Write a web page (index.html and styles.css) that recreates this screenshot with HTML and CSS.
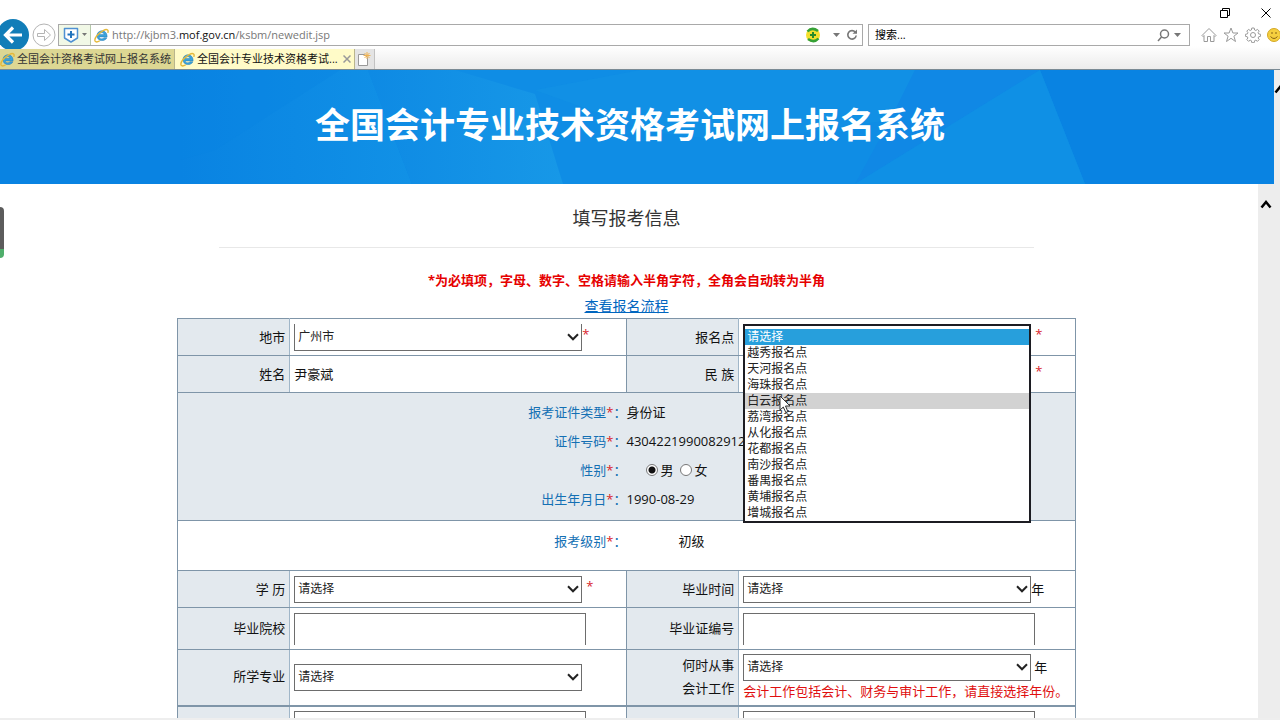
FILE: index.html
```html
<!DOCTYPE html>
<html lang="zh-CN">
<head>
<meta charset="utf-8">
<title>全国会计专业技术资格考试网上报名系统</title>
<link rel="stylesheet" href="styles.css">
</head>
<body>
<svg class="defs" aria-hidden="true">
  <symbol id="ie" viewBox="0 0 16 16">
    <path d="M14 9.500H5.600c.3 2.500 3.900 2.700 4.900.9h3.200c-1.300 4.200-10.200 4.400-10.500-2C3 1.300 14.300.9 14 9.500zM5.700 7h5c-.2-2.600-4.700-2.600-5 0z" fill="#3ba3dc" stroke="#2179b5" stroke-width=".5"/>
    <path d="M14.700 5.200c1.200-3.300-.8-4.700-4.800-2.500C4.500 5.300-.2 11.300 1.200 14c.8 1.300 3 .8 5-.4" fill="none" stroke="#e5b93a" stroke-width="1.500"/>
  </symbol>
  <symbol id="chevron" viewBox="0 0 12 8"><path d="M1 1.300l5 5 5-5" fill="none" stroke="#222" stroke-width="2"/></symbol>
  <symbol id="up" viewBox="0 0 12 10"><path d="M1.500 8.500L6 3l4.500 5.500" fill="none" stroke="#000" stroke-width="2.500"/></symbol>
</svg>

<header class="chrome">
  <div class="titlebar">
    <button class="plain" aria-label="还原"><svg width="10" height="10" viewBox="0 0 10 10" fill="none" stroke="#000"><path d="M.5 2.500h7v7h-7zM2.500 2.500v-2h7v7h-2"/></svg></button>
    <button class="plain" aria-label="关闭"><svg width="10" height="10" viewBox="0 0 10 10" stroke="#000"><path d="M.5.5l9 9M9.500.5l-9 9"/></svg></button>
  </div>
  <div class="toolbar">
    <button class="plain back" aria-label="后退"><svg width="32" height="32" viewBox="0 0 32 32"><circle cx="16" cy="16" r="16" fill="#117db8"/><path d="M25 16H9M16 8.500L8.500 16l7.500 7.500" fill="none" stroke="#fff" stroke-width="3.200"/></svg></button>
    <button class="plain" aria-label="前进"><svg width="24" height="24" viewBox="0 0 24 24" fill="none" stroke="#b4b4b4"><circle cx="12" cy="12" r="11"/><path d="M5.500 10.500h7V6.500l6 5.500-6 5.500v-4h-7z"/></svg></button>
    <div class="address">
      <button class="plain shield" aria-label="安全">
        <svg width="16" height="16" viewBox="0 0 16 16"><path d="M1.500 1.500h13v9.500l-6.500 4-6.500-4z" fill="#fff" stroke="#4f91d2" stroke-width="1.500" stroke-linejoin="round"/><path d="M8 4v7M4.500 7.500h7" stroke="#2274bd" stroke-width="2"/></svg>
        <svg width="5" height="4" viewBox="0 0 5 4"><path d="M0 0h5L2.500 3z" fill="#777"/></svg>
      </button>
      <svg class="ie" width="15" height="15"><use href="#ie"/></svg>
      <div class="url">http://kjbm3.<b>mof.gov.cn</b>/ksbm/newedit.jsp</div>
      <svg width="16" height="16" viewBox="0 0 16 16"><circle cx="8" cy="8" r="7" fill="#f4e02d"/><path d="M2.500 4.500Q7-.5 13 4M13.500 11.500Q9 16.500 3 12" fill="none" stroke="#35a136" stroke-width="2.500"/><path d="M8 5v6M5 8h6" stroke="#278b2b" stroke-width="2"/></svg>
      <svg class="drop" width="7" height="4" viewBox="0 0 7 4"><path d="M0 0h7L3.500 4z" fill="#777"/></svg>
      <button class="plain" aria-label="刷新"><svg width="12" height="12" viewBox="0 0 12 12"><path d="M9.300 3.200A4.200 4.200 0 1 0 10.200 6.500" fill="none" stroke="#777" stroke-width="1.600"/><path d="M6.500 4.800H11V.5z" fill="#777"/></svg></button>
    </div>
    <div class="search">
      <input type="text" value="搜索..." aria-label="搜索">
      <svg width="13" height="13" viewBox="0 0 13 13" fill="none" stroke="#777" stroke-width="1.500"><circle cx="7.500" cy="5" r="4"/><path d="M4.500 8L1 12"/></svg>
      <svg width="7" height="4" viewBox="0 0 7 4"><path d="M0 0h7L3.500 4z" fill="#777"/></svg>
    </div>
    <div class="tools">
      <svg width="16" height="16" viewBox="0 0 16 16" fill="none" stroke="#999"><path d="M1 8.500L8 1.500l7 7-1 1-1-1v6H9.500v-5h-3v5H3v-6l-1 1z"/></svg>
      <svg width="16" height="16" viewBox="0 0 16 16" fill="none" stroke="#999"><path d="M8 1l1.900 5H15l-4.100 3.200 1.600 5.300L8 11.300l-4.500 3.200 1.600-5.300L1 6h5.100z"/></svg>
      <svg width="16" height="16" viewBox="0 0 16 16" fill="none" stroke="#999"><circle cx="8" cy="8" r="2.500"/><path d="M6.800 1h2.400l.4 2 1.200.5 1.700-1.100 1.700 1.700-1.100 1.600.5 1.200 2 .4v2l-2 .5-.5 1.200 1.100 1.600-1.700 1.700-1.700-1.100-1.200.5-.4 2H6.800l-.4-2-1.200-.5-1.700 1.100-1.700-1.700 1.100-1.600L2.400 9.800l-2-.5v-2l2-.4.5-1.200-1.100-1.600 1.700-1.700 1.700 1.100 1.200-.5z"/></svg>
      <svg width="14" height="14" viewBox="0 0 14 14"><circle cx="7" cy="7" r="6.500" fill="#f5cf3f" stroke="#d3a827"/><path d="M5 4v2M9 4v2M3.500 8.500q3.500 4 7 0" fill="none" stroke="#876315"/></svg>
    </div>
  </div>
  <nav class="tabs">
    <button class="plain tab"><svg class="ie" width="15" height="15"><use href="#ie"/></svg><span>全国会计资格考试网上报名系统</span></button>
    <button class="plain tab active"><svg class="ie" width="15" height="15"><use href="#ie"/></svg><span>全国会计专业技术资格考试...</span><svg class="x" width="8" height="8" viewBox="0 0 8 8" stroke="#999" stroke-width="1.500"><path d="M.5.5l7 7M7.500.5l-7 7"/></svg></button>
    <button class="plain newtab" aria-label="新建标签页"><svg width="14" height="15" viewBox="0 0 14 15"><path d="M1.500 2.500h6l3 3v8h-9z" fill="#fff" stroke="#999"/><path d="M10 0v7M6.500 3.500h7M7.500 1l5 5M12.500 1l-5 5" stroke="#efb252"/></svg></button>
  </nav>
</header>

<div class="viewport">
  <div class="page">
    <div class="banner">
      <svg class="facets" viewBox="0 0 1274 114" preserveAspectRatio="none" aria-hidden="true">
        <defs>
          <linearGradient id="fade"><stop offset="0" stop-color="#0983e2"/><stop offset="1" stop-color="#1191e6"/></linearGradient>
          <linearGradient id="glow"><stop offset="0" stop-color="#0e8ae4"/><stop offset="1" stop-color="#1798e7"/></linearGradient>
        </defs>
        <path d="M180 0h188l44 114H180z" fill="url(#fade)"/>
        <path d="M180 0h160L215 80l-35 10z" fill="#0983e2" fill-opacity=".35"/>
        <path d="M368 0h672l45 114H412z" fill="#0f8de5"/>
        <path d="M368 0h87l80 24 28 90H412z" fill="url(#glow)"/>
        <path d="M535 20l105-20h275l-25 50-150 22-90-10z" fill="#1292e5" fill-opacity=".6"/>
        <path d="M915 0h125L855 114l35-64z" fill="#1088e5"/>
        <path d="M1040 0l45 114H855z" fill="#0f90e5"/>
      </svg>
      <h1>全国会计专业技术资格考试网上报名系统</h1>
    </div>
    <div class="frame">
      <main>
        <h2>填写报考信息</h2>
        <p class="notice">*为必填项，字母、数字、空格请输入半角字符，全角会自动转为半角</p>
        <p class="guide"><a href="#flow">查看报名流程</a></p>
        <table class="form">
          <colgroup><col class="c-label"><col class="c-field"><col class="c-label"><col class="c-field"></colgroup>
          <tr>
            <th><label for="city">地市</label></th>
            <td><div class="line"><span class="pick open-top"><select id="city"><option>广州市</option></select><svg><use href="#chevron"/></svg></span><i>*</i></div></td>
            <th><label for="site">报名点</label></th>
            <td>
              <div class="line anchor"><span class="pick"><select id="site"><option>请选择</option></select><svg><use href="#chevron"/></svg></span><i class="spaced">*</i>
                <ul class="options" role="listbox" aria-label="报名点">
                  <li class="selected" role="option" aria-selected="true">请选择</li>
                  <li role="option">越秀报名点</li>
                  <li role="option">天河报名点</li>
                  <li role="option">海珠报名点</li>
                  <li class="hover" role="option">白云报名点<svg class="cursor" width="12" height="19" viewBox="0 0 12 19"><path d="M1 1v14l3.300-3 2.500 5.500 2-1L6.500 11H11z" fill="#fff" stroke="#333"/></svg></li>
                  <li role="option">荔湾报名点</li>
                  <li role="option">从化报名点</li>
                  <li role="option">花都报名点</li>
                  <li role="option">南沙报名点</li>
                  <li role="option">番禺报名点</li>
                  <li role="option">黄埔报名点</li>
                  <li role="option">增城报名点</li>
                </ul>
              </div>
            </td>
          </tr>
          <tr>
            <th>姓名</th>
            <td>尹豪斌</td>
            <th><label for="nation">民 族</label></th>
            <td><div class="line"><span class="pick"><select id="nation"><option></option></select><svg><use href="#chevron"/></svg></span><i class="spaced">*</i></div></td>
          </tr>
          <tr class="identity">
            <td colspan="4">
              <dl>
                <dt>报考证件类型<i>*</i>：</dt><dd>身份证</dd>
                <dt>证件号码<i>*</i>：</dt><dd>4304221990082912</dd>
                <dt>性别<i>*</i>：</dt><dd class="sex"><label><input type="radio" name="sex" checked>男</label><label><input type="radio" name="sex">女</label></dd>
                <dt>出生年月日<i>*</i>：</dt><dd>1990-08-29</dd>
              </dl>
            </td>
          </tr>
          <tr class="level">
            <td colspan="4"><dl><dt>报考级别<i>*</i>：</dt><dd>初级</dd></dl></td>
          </tr>
          <tr>
            <th><label for="degree">学 历</label></th>
            <td><div class="line"><span class="pick"><select id="degree"><option>请选择</option></select><svg><use href="#chevron"/></svg></span><i class="spaced">*</i></div></td>
            <th><label for="grad">毕业时间</label></th>
            <td><div class="line"><span class="pick"><select id="grad"><option>请选择</option></select><svg><use href="#chevron"/></svg></span>年</div></td>
          </tr>
          <tr class="text-row">
            <th><label for="school">毕业院校</label></th>
            <td><input class="text" id="school" type="text"></td>
            <th><label for="diploma">毕业证编号</label></th>
            <td><input class="text" id="diploma" type="text"></td>
          </tr>
          <tr class="work">
            <th><label for="major">所学专业</label></th>
            <td><div class="line"><span class="pick"><select id="major"><option>请选择</option></select><svg><use href="#chevron"/></svg></span></div></td>
            <th><label for="since">何时从事<br>会计工作</label></th>
            <td><div class="line"><span class="pick"><select id="since"><option>请选择</option></select><svg><use href="#chevron"/></svg></span><span class="unit">年</span></div><p class="hint">会计工作包括会计、财务与审计工作，请直接选择年份。</p></td>
          </tr>
          <tr class="text-row">
            <th></th>
            <td><input class="text" type="text" aria-label="补充信息一"></td>
            <th></th>
            <td><input class="text" type="text" aria-label="补充信息二"></td>
          </tr>
        </table>
      </main>
      <div class="scroll"><svg width="12" height="10"><use href="#up"/></svg></div>
    </div>
  </div>
  <div class="outer-scroll"><svg width="12" height="10"><use href="#up"/></svg></div>
  <div class="side-widget"></div>
</div>
<div class="bottom-edge"></div>
</body>
</html>
```
FILE: styles.css
```css
* { box-sizing: border-box; }
body {
  margin: 0;
  height: 100vh;
  display: flex;
  flex-direction: column;
  overflow: hidden;
  background: #fff;
  color: #111;
  font: 13px/20px "Open Sans", "Noto Sans CJK SC", sans-serif;
}
svg { display: block; flex: none; }
.defs { position: absolute; width: 0; height: 0; }
h1, h2, p, ul, dl, dd { margin: 0; padding: 0; }
i { color: #d8232a; font-style: normal; }
.plain {
  display: flex;
  align-items: center;
  padding: 0;
  border: 0;
  background: none;
  color: inherit;
  font: inherit;
  flex: none;
}

/* Browser window */
.chrome { flex: none; border-bottom: 1px solid #7a8a94; }
.titlebar { display: flex; justify-content: flex-end; gap: 31px; height: 24px; padding: 2px 9px 0 0; }
.toolbar { display: flex; align-items: center; height: 22px; }
.back { margin: 0 3px 0 -3px; }
.address, .search { display: flex; align-items: center; height: 22px; border: 1px solid #a9a9a9; background: #fff; }
.address { flex: 1; margin: 0 5px 0 2px; padding-right: 4px; font-size: 11px; }
.shield { gap: 3px; height: 20px; padding: 0 3px 0 4px; background: #f1f8e6; border-right: 1px solid #b5c8a8; }
.address > .ie { margin-left: 3px; }
.url { flex: 1; padding-left: 3px; color: #777; }
.url b { color: #111; font-weight: 400; }
.drop { margin: 0 6px 0 12px; }
.search { flex: none; width: 322px; padding-right: 8px; gap: 4px; }
.search input { flex: 1; min-width: 0; border: 0; padding: 0 6px; font: inherit; font-size: 11px; background: none; }
.tools { display: flex; align-items: center; gap: 6px; padding-left: 11px; margin-right: -1px; }
.tabs { display: flex; height: 23px; padding-top: 3px; background: linear-gradient(#fff, #ececec); }
.tab { gap: 2px; padding: 0 3px 0 0; background: #ddd793; border-right: 1px solid #b9b58d; font-size: 11px; color: #333; }
.tab.active { padding-left: 5px; background: #fffbc8; color: #111; }
.tab .x { margin-left: 3px; }
.newtab { width: 20px; justify-content: center; background: #e4e4e4; border-right: 1px solid #c2c2c2; }

/* Page */
.viewport { position: relative; flex: 1; min-height: 0; display: flex; overflow: hidden; }
.page { flex: 1; min-width: 0; display: flex; flex-direction: column; }
.banner { position: relative; flex: none; background: #0983e2; padding: 29px 14px 33px 0; }
.facets { position: absolute; inset: 0; width: 100%; height: 100%; }
.banner h1 { position: relative; text-align: center; color: #fff; font-size: 35px; line-height: 52px; }
.frame { flex: 1; min-height: 0; display: flex; }
main { flex: 1; min-width: 0; padding: 0 5px 0 0; overflow: hidden; }
.scroll { width: 16px; padding: 15px 2px 0; background: #ededed; }
.outer-scroll { width: 6px; padding-top: 14px; overflow: hidden; background: #ededed; }
.side-widget {
  position: absolute;
  left: 0;
  top: 137px;
  width: 4px;
  height: 51px;
  border-radius: 0 4px 4px 0;
  background: linear-gradient(#5c5c5c 42px, #4fae6b 42px);
}
.bottom-edge { flex: none; height: 2px; background: #eee; }
h2 {
  width: 65%;
  margin: 0 auto 23px;
  padding: 19px 0 13px;
  border-bottom: 1px solid #e8e8e8;
  text-align: center;
  color: #333;
  font-size: 18px;
  line-height: 31px;
  font-weight: 400;
}
.notice { text-align: center; color: #e60000; font-weight: 700; line-height: 18px; }
.guide { text-align: center; font-size: 14px; line-height: 22px; margin: 6px 0 1px; }
.guide a { color: #0066bf; }

/* Registration form */
.form { width: 90%; max-width: 899px; margin: 0 auto; border-collapse: collapse; table-layout: fixed; }
.form th, .form td { height: 37px; padding: 0 4px; border: 1px solid #7f95a8; text-align: left; font-weight: 400; }
.form th { padding-bottom: 1px; background: #e3e9ee; text-align: right; border-right-color: #a0b6c8; border-left-color: #a0b6c8; }
.form th:first-child { border-left-color: #7f95a8; }
.c-label { width: 12.5%; }
.c-field { width: 37.5%; }
.line { display: flex; align-items: center; }
.line i { align-self: flex-start; }
.pick { position: relative; width: 288px; }
.pick select {
  display: block;
  width: 100%;
  height: 27px;
  padding: 0 3px;
  border: 1px solid #6d6d6d;
  border-radius: 0;
  appearance: none;
  background: #fff;
  color: #222;
  font: inherit;
  font-size: 12px;
}
.pick.open-top select { border-top: 0; }
.pick svg { position: absolute; right: 3px; top: 9px; width: 12px; height: 8px; }
.spaced { margin-left: 4px; }
.unit { margin-left: 3px; }
.anchor { position: relative; }
.options {
  position: absolute;
  z-index: 2;
  left: 0;
  top: 0;
  width: 288px;
  padding-top: 3px;
  border: 2px solid #1c1c22;
  background: #fff;
  list-style: none;
  color: #222;
  font-size: 12px;
  line-height: 16px;
}
.options li { position: relative; padding-left: 2px; }
.options .selected { background: #279fdc; color: #fff; }
.options .hover { background: #d2d2d2; }
.cursor { position: absolute; z-index: 1; left: 34px; top: 2px; }
.form dl { display: grid; grid-template-columns: 1fr 1fr; line-height: 29px; }
.form dt { text-align: right; color: #1470b4; }
.form .identity td { height: 128px; padding-bottom: 2px; background: #e3e9ee; }
.form .level td { height: 50px; padding-bottom: 9px; }
.level dd { padding-left: 52px; }
.sex { display: flex; gap: 6px; padding-left: 19px; }
.sex label { display: flex; align-items: center; gap: 3px; }
.sex input {
  width: 12px;
  height: 12px;
  margin: 0;
  border: 1px solid #777;
  border-radius: 50%;
  appearance: none;
  background: #fff;
}
.sex input:checked { background: radial-gradient(circle, #111 3px, #fff 4px); }
.form .text-row th, .form .text-row td { height: 42px; }
.text { display: block; width: 292px; height: 32px; padding: 0 4px; border: 1px solid #6d6d6d; border-bottom: 0; background: #fff; font: inherit; }
.form .work th, .form .work td { height: 56px; border-bottom: 2px solid #7f95a8; }
.work th { line-height: 23px; }
.hint { color: #e00f0f; line-height: 20px; }
```
